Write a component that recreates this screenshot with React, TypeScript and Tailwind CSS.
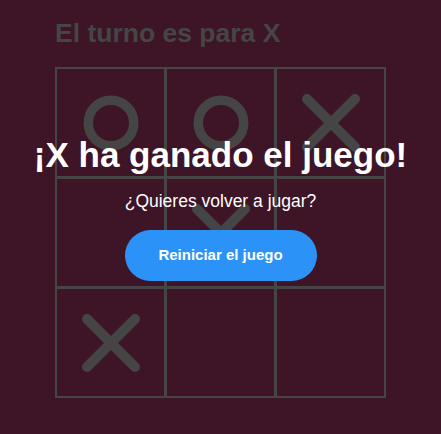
import React from "react";

type Mark = "X" | "O" | null;

const board: Mark[] = ["O", "O", "X", null, "X", null, "X", null, null];

function XMark() {
  return (
    <svg width="60" height="60" viewBox="0 0 60 60">
      <path
        d="M6 6 L54 54 M54 6 L6 54"
        stroke="#454545"
        strokeWidth="10"
        strokeLinecap="round"
        fill="none"
      />
    </svg>
  );
}

function OMark() {
  return (
    <svg width="60" height="60" viewBox="0 0 60 60">
      <circle cx="30" cy="30" r="22.75" stroke="#454545" strokeWidth="9.5" fill="none" />
    </svg>
  );
}

export default function App() {
  return (
    <div
      className="relative min-h-screen w-full bg-[#3d1526] pt-[18px]"
      style={{ fontFamily: '"Liberation Sans", Arial, sans-serif' }}
    >
      <div className="mx-auto w-[331px]">
        <h2 className="text-[26.5px] font-bold leading-[30px] text-[#454545]">El turno es para X</h2>
        <div className="mt-[19px] grid grid-cols-[107px_107px_107px] gap-[3px] border-2 border-[#454545] bg-[#454545]">
          {board.map((m, i) => (
            <div key={i} className="flex h-[107px] items-center justify-center bg-[#3d1526]">
              {m === "X" ? <XMark /> : m === "O" ? <OMark /> : null}
            </div>
          ))}
        </div>
      </div>

      {/* winner overlay */}
      <div className="absolute inset-x-0 top-[135px] flex flex-col items-center text-white">
        <h1 className="text-[35px] font-bold leading-[40px]">¡X ha ganado el juego!</h1>
        <p className="mt-[16px] text-[17.5px] leading-[20px]">¿Quieres volver a jugar?</p>
        <button className="mt-[19px] h-[51px] w-[192px] rounded-full bg-[#2b93f7] text-[15px] font-bold text-white">
          Reiniciar el juego
        </button>
      </div>
    </div>
  );
}
